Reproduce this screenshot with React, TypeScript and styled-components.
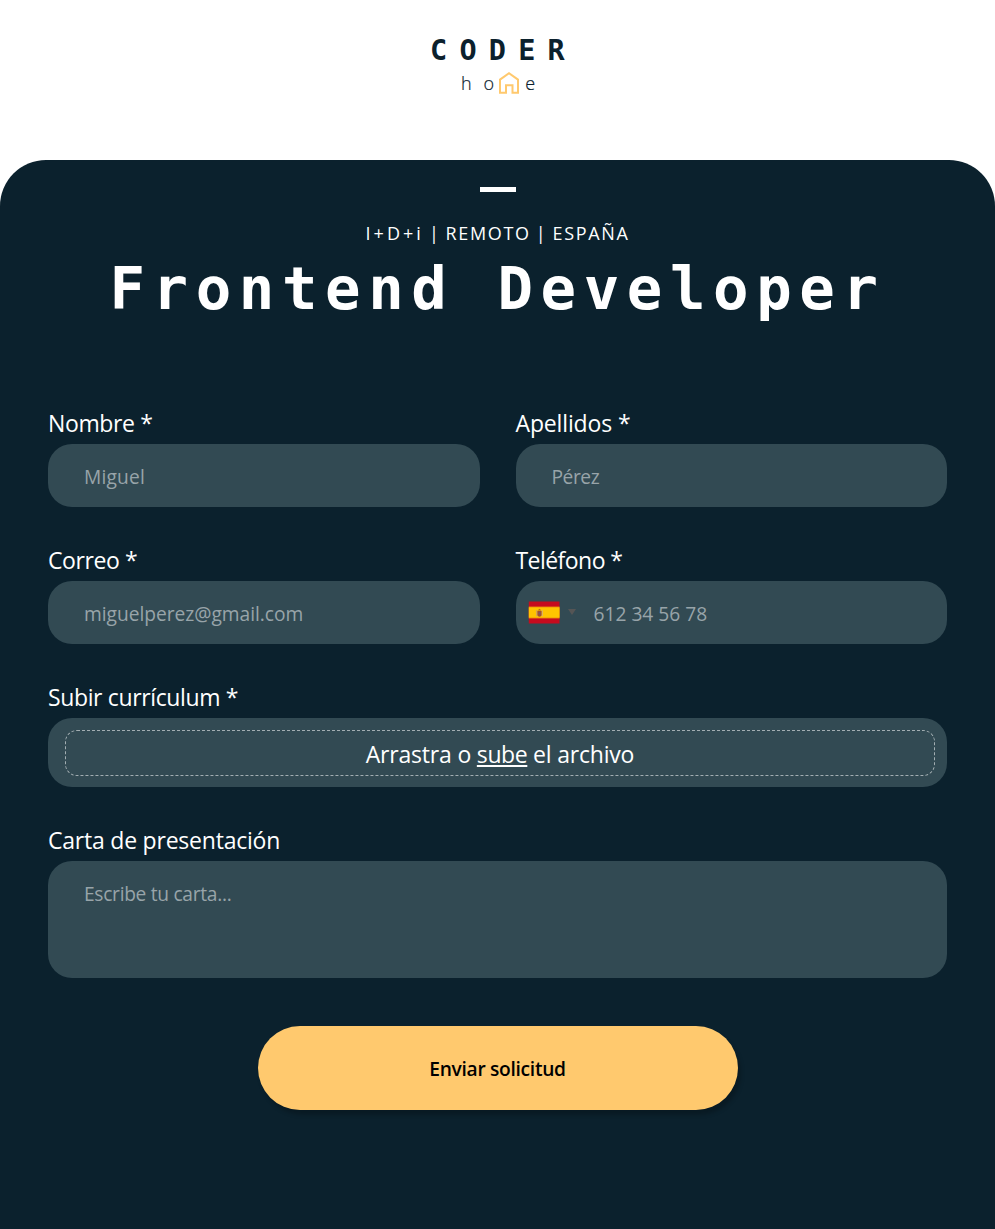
import React from 'react';
import styled, { createGlobalStyle } from 'styled-components';

const colors = {
  navy: '#0b212d',
  field: '#324a53',
  placeholder: '#98a4a9',
  amber: '#ffc96e',
  white: '#ffffff',
};

const sans = '"Open Sans", "Noto Sans", sans-serif';
const mono = '"DejaVu Sans Mono", monospace';

const GlobalStyle = createGlobalStyle`
  *, *::before, *::after { box-sizing: border-box; }
  body {
    margin: 0;
    background: ${colors.white};
    font-family: ${sans};
  }
`;

const Page = styled.div`
  display: flex;
  flex-direction: column;
  height: 1229px;
  overflow: hidden;
`;

const Header = styled.header`
  display: flex;
  flex-direction: column;
  align-items: center;
  height: 160px;
  padding-top: 35px;
  color: ${colors.navy};
`;

const Brand = styled.div`
  font: 700 28.5px/32px ${mono};
  letter-spacing: 12.2px;
  padding-left: 12px;
`;

const BrandHome = styled.div`
  display: flex;
  align-items: flex-start;
  height: 32px;
  margin-top: 4px;
  padding-left: 1px;
  font: 300 18px/25px ${sans};
  -webkit-text-stroke: 0.2px ${colors.navy};

  svg { margin: 0 5px 0 4px; }
`;

const Letter = styled.span<{ $gap?: number }>`
  margin-right: ${({ $gap = 0 }) => $gap}px;
`;

const Panel = styled.main`
  flex: 1;
  display: flex;
  flex-direction: column;
  align-items: center;
  padding: 27px 48px 0;
  border-radius: 46px 46px 0 0;
  background: ${colors.navy};
  color: ${colors.white};
`;

const Dash = styled.div`
  width: 36px;
  height: 4.5px;
  background: ${colors.white};
`;

const Meta = styled.p`
  margin: 28.5px 0 0;
  font-size: 18px;
  line-height: 26px;
  letter-spacing: 1.65px;
  word-spacing: -1.2px;
  white-space: nowrap;
`;

const Department = styled.span`
  letter-spacing: 3px;
`;

const Title = styled.h1`
  margin: 6px 0 0;
  height: 72px;
  font: 700 59px/73px ${mono};
  letter-spacing: 7.6px;
  white-space: nowrap;
`;

const Form = styled.form`
  display: grid;
  grid-template-columns: 1fr 1fr;
  gap: 38px 36px;
  width: 100%;
  margin-top: 84px;
`;

const Field = styled.div<{ $wide?: boolean }>`
  display: flex;
  flex-direction: column;
  gap: 6px;
  min-width: 0;
  grid-column: ${({ $wide }) => ($wide ? '1 / -1' : 'auto')};
`;

const Label = styled.label<{ $tracking: number }>`
  font-size: 23px;
  line-height: 30px;
  letter-spacing: ${({ $tracking }) => $tracking}px;
`;

const Control = styled.div`
  display: flex;
  align-items: center;
  height: 63px;
  border-radius: 24px;
  background: ${colors.field};
`;

const Input = styled.input<{ $tracking: number; $inset?: number }>`
  flex: 1;
  min-width: 0;
  height: 63px;
  padding: 2px 36px 0 ${({ $inset = 36 }) => $inset}px;
  border: 0;
  outline: 0;
  background: transparent;
  color: ${colors.white};
  font: 400 19.2px ${sans};
  letter-spacing: ${({ $tracking }) => $tracking}px;

  &::placeholder { color: ${colors.placeholder}; opacity: 1; }
`;

const Country = styled.button`
  display: flex;
  align-items: center;
  gap: 8px;
  height: 63px;
  padding: 0 0 0 12px;
  border: 0;
  background: transparent;
`;

const Upload = styled.div`
  display: flex;
  height: 69px;
  padding: 12px 12px 11px 17px;
  border-radius: 24px;
  background: ${colors.field};
`;

const DropZone = styled.div`
  flex: 1;
  padding-top: 5px;
  border: 1px dashed #a3aeb2;
  border-radius: 12px;
  font-size: 23px;
  line-height: 36px;
  letter-spacing: -0.2px;
  text-align: center;

  u {
    letter-spacing: -0.4px;
    text-decoration-thickness: 2px;
    text-underline-offset: 2px;
    text-decoration-skip-ink: none;
  }
`;

const Letterbox = styled.textarea`
  display: block;
  width: 100%;
  height: 117px;
  padding: 19px 36px;
  border: 0;
  outline: 0;
  border-radius: 24px;
  resize: none;
  background: ${colors.field};
  color: ${colors.white};
  font: 400 19.2px/27px ${sans};
  letter-spacing: -0.3px;

  &::placeholder { color: ${colors.placeholder}; opacity: 1; }
`;

const Submit = styled.button`
  grid-column: 1 / -1;
  justify-self: center;
  width: 480px;
  height: 84px;
  margin-top: 10px;
  padding: 1px 0 0;
  border: 0;
  border-radius: 42px;
  background: ${colors.amber};
  box-shadow: 3px 5px 4px rgba(0, 0, 0, 0.22);
  color: #000;
  font: 600 19.2px ${sans};
  letter-spacing: -0.3px;
`;

const HouseIcon = () => (
  <svg width="22" height="24" viewBox="0 0 22 24" fill="none" stroke={colors.amber} strokeWidth="2">
    <path d="M2 21.8V8.6L11 2.2l9 6.4v13.2h-5.5v-7.6H8v7.6z" />
  </svg>
);

const SpainFlag = () => (
  <svg width="32" height="23" viewBox="0 0 32 23">
    <rect x="0.8" y="0.5" width="30.7" height="22" fill="#c60b1e" />
    <rect x="0.8" y="5.5" width="30.7" height="12" fill="#e57a10" />
    <rect x="0.8" y="6.3" width="30.7" height="10.4" fill="#ffc400" />
    <rect x="8.2" y="9.2" width="1.2" height="6" fill="#c9a06a" />
    <rect x="13.6" y="9.2" width="1.2" height="6" fill="#d6b077" />
    <path d="M9.4 10h4.2v3.8c0 2.6-4.2 2.6-4.2 0z" fill="#a5512f" />
    <path d="M9.6 9.6l1.9-1.8 1.9 1.8z" fill="#b5651d" />
    <circle cx="11.5" cy="12.2" r="1.2" fill="#7d5a63" />
  </svg>
);

const Caret = () => (
  <svg width="8" height="8" viewBox="0 0 8 8">
    <path d="M0 0h8L4 6z" fill="#555" />
  </svg>
);

export default function App() {
  return (
    <>
      <GlobalStyle />
      <Page>
        <Header>
          <Brand>CODER</Brand>
          <BrandHome>
            <Letter $gap={12}>h</Letter>
            <Letter>o</Letter>
            <HouseIcon />
            <Letter>e</Letter>
          </BrandHome>
        </Header>
        <Panel>
          <Dash />
          <Meta>
            <Department>I+D+i</Department> | REMOTO | ESPAÑA
          </Meta>
          <Title>Frontend Developer</Title>
          <Form>
            <Field>
              <Label htmlFor="name" $tracking={-0.36}>Nombre *</Label>
              <Control>
                <Input id="name" placeholder="Miguel" $tracking={0.2} />
              </Control>
            </Field>
            <Field>
              <Label htmlFor="surname" $tracking={-0.14}>Apellidos *</Label>
              <Control>
                <Input id="surname" placeholder="Pérez" $tracking={-0.45} />
              </Control>
            </Field>
            <Field>
              <Label htmlFor="email" $tracking={-0.4}>Correo *</Label>
              <Control>
                <Input id="email" placeholder="miguelperez@gmail.com" $tracking={-0.03} />
              </Control>
            </Field>
            <Field>
              <Label htmlFor="phone" $tracking={-0.55}>Teléfono *</Label>
              <Control>
                <Country type="button">
                  <SpainFlag />
                  <Caret />
                </Country>
                <Input id="phone" placeholder="612 34 56 78" $tracking={0} $inset={18} />
              </Control>
            </Field>
            <Field $wide>
              <Label as="div" $tracking={-0.37}>Subir currículum *</Label>
              <Upload>
                <DropZone>
                  Arrastra o <u>sube</u> el archivo
                </DropZone>
              </Upload>
            </Field>
            <Field $wide>
              <Label htmlFor="letter" $tracking={-0.22}>Carta de presentación</Label>
              <Letterbox id="letter" placeholder="Escribe tu carta..." />
            </Field>
            <Submit type="button">Enviar solicitud</Submit>
          </Form>
        </Panel>
      </Page>
    </>
  );
}
